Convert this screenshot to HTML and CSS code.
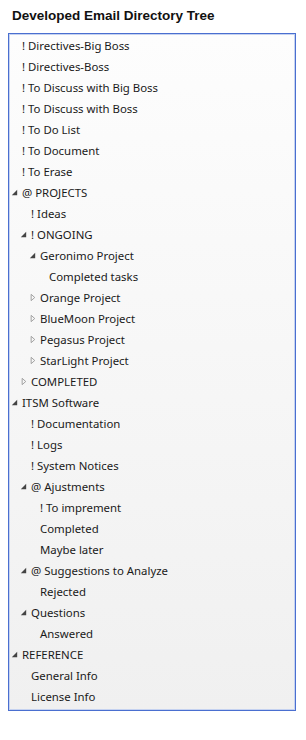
FILE: index.html
```html
<!DOCTYPE html>
<html>
<head>
<meta charset="utf-8">
<link rel="stylesheet" href="styles.css">
</head>
<body>
<h1 class="title">Developed Email Directory Tree</h1>
<div class="tree">
  <div class="row l0"><span class="t">! Directives-Big Boss</span></div>
  <div class="row l0"><span class="t">! Directives-Boss</span></div>
  <div class="row l0"><span class="t">! To Discuss with Big Boss</span></div>
  <div class="row l0"><span class="t">! To Discuss with Boss</span></div>
  <div class="row l0"><span class="t">! To Do List</span></div>
  <div class="row l0"><span class="t">! To Document</span></div>
  <div class="row l0"><span class="t">! To Erase</span></div>
  <div class="row l0"><svg class="arr" viewBox="0 0 10 10"><path d="M2 8 L8 8 L8 2 Z" fill="#444"/></svg><span class="t">@ PROJECTS</span></div>
  <div class="row l1"><span class="t">! Ideas</span></div>
  <div class="row l1"><svg class="arr" viewBox="0 0 10 10"><path d="M2 8 L8 8 L8 2 Z" fill="#444"/></svg><span class="t">! ONGOING</span></div>
  <div class="row l2"><svg class="arr" viewBox="0 0 10 10"><path d="M2 8 L8 8 L8 2 Z" fill="#444"/></svg><span class="t">Geronimo Project</span></div>
  <div class="row l3"><span class="t">Completed tasks</span></div>
  <div class="row l2"><svg class="arr" viewBox="0 0 10 10"><path d="M3.5 1.5 L7.5 5 L3.5 8.5 Z" fill="none" stroke="#999" stroke-width="1"/></svg><span class="t">Orange Project</span></div>
  <div class="row l2"><svg class="arr" viewBox="0 0 10 10"><path d="M3.5 1.5 L7.5 5 L3.5 8.5 Z" fill="none" stroke="#999" stroke-width="1"/></svg><span class="t">BlueMoon Project</span></div>
  <div class="row l2"><svg class="arr" viewBox="0 0 10 10"><path d="M3.5 1.5 L7.5 5 L3.5 8.5 Z" fill="none" stroke="#999" stroke-width="1"/></svg><span class="t">Pegasus Project</span></div>
  <div class="row l2"><svg class="arr" viewBox="0 0 10 10"><path d="M3.5 1.5 L7.5 5 L3.5 8.5 Z" fill="none" stroke="#999" stroke-width="1"/></svg><span class="t">StarLight Project</span></div>
  <div class="row l1"><svg class="arr" viewBox="0 0 10 10"><path d="M3.5 1.5 L7.5 5 L3.5 8.5 Z" fill="none" stroke="#999" stroke-width="1"/></svg><span class="t">COMPLETED</span></div>
  <div class="row l0"><svg class="arr" viewBox="0 0 10 10"><path d="M2 8 L8 8 L8 2 Z" fill="#444"/></svg><span class="t">ITSM Software</span></div>
  <div class="row l1"><span class="t">! Documentation</span></div>
  <div class="row l1"><span class="t">! Logs</span></div>
  <div class="row l1"><span class="t">! System Notices</span></div>
  <div class="row l1"><svg class="arr" viewBox="0 0 10 10"><path d="M2 8 L8 8 L8 2 Z" fill="#444"/></svg><span class="t">@ Ajustments</span></div>
  <div class="row l2"><span class="t">! To imprement</span></div>
  <div class="row l2"><span class="t">Completed</span></div>
  <div class="row l2"><span class="t">Maybe later</span></div>
  <div class="row l1"><svg class="arr" viewBox="0 0 10 10"><path d="M2 8 L8 8 L8 2 Z" fill="#444"/></svg><span class="t">@ Suggestions to Analyze</span></div>
  <div class="row l2"><span class="t">Rejected</span></div>
  <div class="row l1"><svg class="arr" viewBox="0 0 10 10"><path d="M2 8 L8 8 L8 2 Z" fill="#444"/></svg><span class="t">Questions</span></div>
  <div class="row l2"><span class="t">Answered</span></div>
  <div class="row l0"><svg class="arr" viewBox="0 0 10 10"><path d="M2 8 L8 8 L8 2 Z" fill="#444"/></svg><span class="t">REFERENCE</span></div>
  <div class="row l1"><span class="t">General Info</span></div>
  <div class="row l1"><span class="t">License Info</span></div>
</div>
</body>
</html>
```
FILE: styles.css
```css
html, body { margin: 0; padding: 0; background: #fff; }
body { padding: 7px 10px 0 8px; }
.title {
  font-family: "Liberation Sans", Arial, sans-serif;
  font-weight: bold;
  font-size: 13.5px;
  color: #111;
  margin: 0 0 8px 4px;
  line-height: 18px;
}
.tree {
  width: 286px;
  height: 675px;
  border: 1px solid #4a6fd0;
  box-shadow: inset 0 0 0 1px #c5d2f0;
  background: linear-gradient(to bottom, #fdfdfd 0%, #f0f0f0 100%);
  padding-top: 1px;
  box-sizing: content-box;
  font-family: "Noto Sans", sans-serif;
  font-size: 11.4px;
  color: #1a1a1a;
}
.row {
  display: flex;
  align-items: center;
  height: 21px;
}
.row.l0 { padding-left: 13px; }
.row.l1 { padding-left: 22px; }
.row.l2 { padding-left: 31px; }
.row.l3 { padding-left: 40px; }
.arr {
  width: 9px;
  height: 9px;
  margin-left: -12px;
  margin-right: 3px;
  flex: none;
}
.t { white-space: nowrap; }
```
